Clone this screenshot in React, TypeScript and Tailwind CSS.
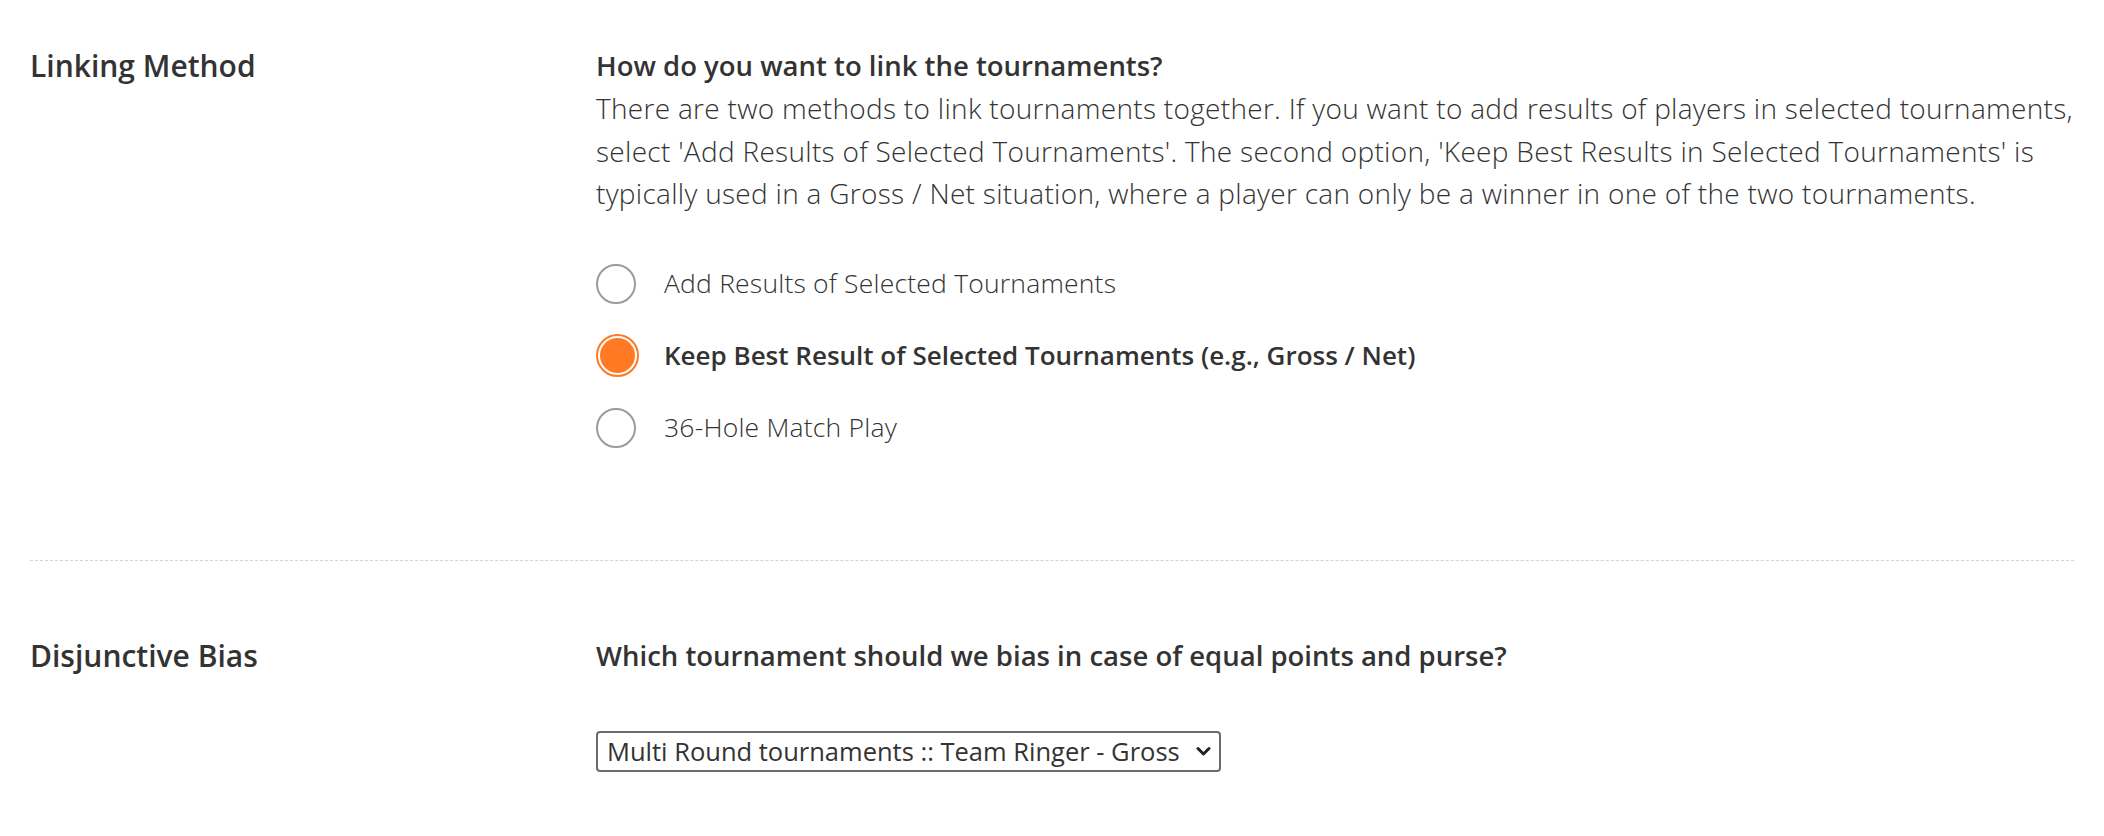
import React, { useState } from 'react';

const options = [
  'Add Results of Selected Tournaments',
  'Keep Best Result of Selected Tournaments (e.g., Gross / Net)',
  '36-Hole Match Play',
];

function Radio({ checked }: { checked: boolean }) {
  if (checked) {
    return (
      <span className="flex h-[43px] w-[43px] shrink-0 items-center justify-center rounded-full border-2 border-[#ff7a22] bg-white">
        <span className="h-[35px] w-[35px] rounded-full bg-[#ff7a22]" />
      </span>
    );
  }
  return <span className="h-[40px] w-[40px] shrink-0 rounded-full border-2 border-[#9b9b9b] bg-white" />;
}

export default function App() {
  const [method, setMethod] = useState(1);
  const [bias, setBias] = useState('gross');

  return (
    <div className="min-h-[836px] bg-white px-[30px] font-['Open_Sans',sans-serif] text-[#333]">
      <div className="flex border-b border-dashed border-[#d2d2d2] pt-[45px] pb-[112px]">
        <div className="w-[566px] shrink-0 text-[30px] font-semibold leading-[42px]">Linking Method</div>
        <div className="flex-1">
          <h2 className="text-[27.5px] font-semibold leading-[42px]">How do you want to link the tournaments?</h2>
          <p className="whitespace-nowrap text-[28px] font-light leading-[42.5px] tracking-[0.3px]">
            There are two methods to link tournaments together. If you want to add results of players in selected tournaments,
            <br />
            select 'Add Results of Selected Tournaments'. The second option, 'Keep Best Results in Selected Tournaments' is
            <br />
            typically used in a Gross / Net situation, where a player can only be a winner in one of the two tournaments.
          </p>
          <div className="mt-[49px] flex flex-col gap-[32px]">
            {options.map((label, i) => (
              <label key={i} className="flex h-[40px] cursor-pointer items-center" onClick={() => setMethod(i)}>
                <span className="flex w-[68px] items-center">
                  <Radio checked={method === i} />
                </span>
                <span className={method === i ? 'text-[26px] font-semibold' : 'text-[26.5px] font-light tracking-[0.2px]'}>{label}</span>
              </label>
            ))}
          </div>
        </div>
      </div>

      <div className="flex pt-[74px] pb-[64px]">
        <div className="w-[566px] shrink-0 text-[30px] font-semibold leading-[42px]">Disjunctive Bias</div>
        <div className="flex-1">
          <h2 className="text-[27.5px] font-semibold leading-[42px]">Which tournament should we bias in case of equal points and purse?</h2>
          <div className="relative mt-[54px] inline-block">
            <select
              value={bias}
              onChange={e => setBias(e.target.value)}
              className="h-[41px] w-[625px] appearance-none rounded-[4px] border-2 border-[#6b6b6b] bg-white pl-[9px] pr-[30px] text-[25.5px] leading-[35px] text-[#333]"
            >
              <option value="gross">Multi Round tournaments :: Team Ringer - Gross</option>
              <option value="net">Multi Round tournaments :: Team Ringer - Net</option>
            </select>
            <svg className="pointer-events-none absolute right-[10px] top-[14px] h-[13px] w-[15px]" viewBox="0 0 15 13">
              <path d="M2 3.5 L7.5 9 L13 3.5" fill="none" stroke="#222" strokeWidth="3" strokeLinecap="round" strokeLinejoin="round" />
            </svg>
          </div>
        </div>
      </div>
    </div>
  );
}
